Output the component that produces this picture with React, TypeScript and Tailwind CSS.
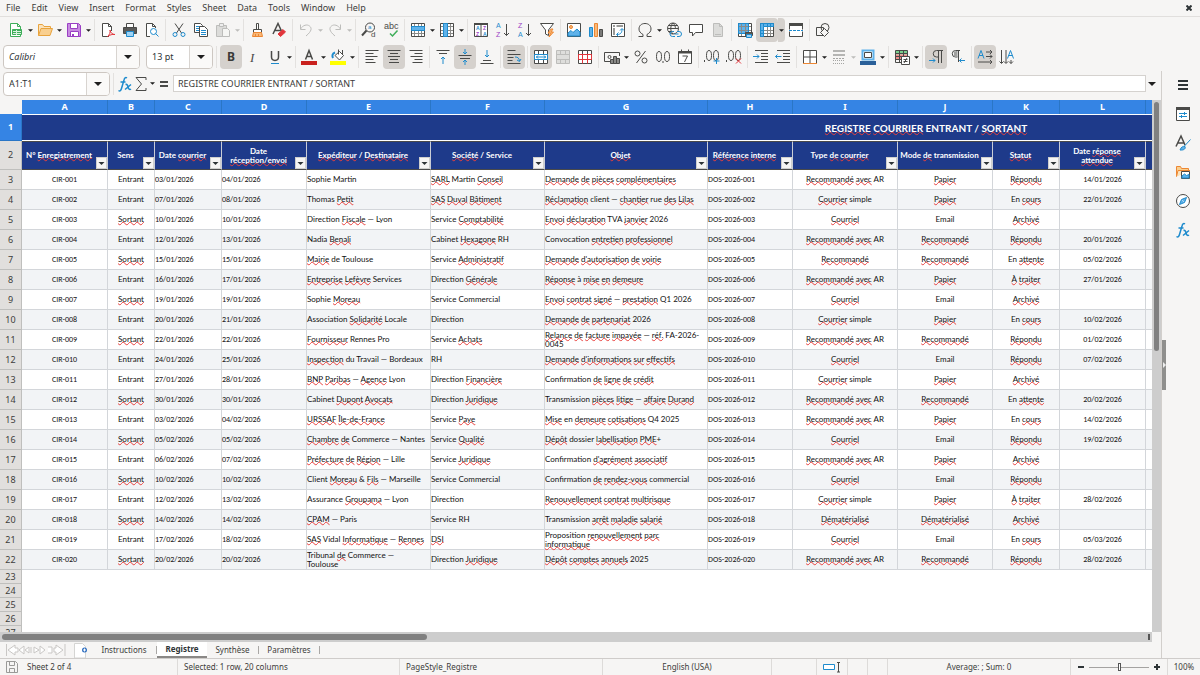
import type { ReactNode } from 'react'
import clsx from 'clsx'

const INK = '#4a4a48'
const BLUE = '#1e8bcd'
const GREEN = '#3fae5a'
const ORANGE = '#ed8733'
const RED = '#e2353b'
const PURPLE = '#9a3fc4'
const FADED = '#bdbdbb'

const glyphFont = 'Noto Sans, sans-serif'
const letterFont = 'Liberation Sans, sans-serif'

const grid = (
  <>
    <path d="M2 4.5h12M2 8.5h12M2 11.5h12M4.5 2v12M8.5 2v12M11.5 2v12" stroke="#8a8a88" />
    <path d="M1.5 1.5h13v13h-13z" />
  </>
)

const icons: Record<string, ReactNode> = {
  newDoc: (
    <>
      <path d="M2.5 1.5h7l3 3v10h-10z" fill="#fff" stroke={GREEN} />
      <path d="M9.5 1.5v3h3" stroke={GREEN} />
      <path d="M4.5 7.5h9v5h-9z" fill={GREEN} stroke={GREEN} />
      <path d="M5 9.5h8M5 11.5h8M8.5 8v5" stroke="#d9f2df" />
    </>
  ),
  open: (
    <>
      <path d="M1.5 13.5v-11h4l1.5 2h6.5v2" fill="#fbe3bd" stroke="#e8a33d" />
      <path d="M1.5 13.5l2.5-7h11.5l-2.5 7z" fill="#f9cf8f" stroke="#e8a33d" />
    </>
  ),
  save: (
    <>
      <path d="M1.5 1.5h11l2 2v11h-13z" fill="#c88be0" stroke={PURPLE} />
      <path d="M4.5 1.5h7v5h-7zM4.5 9.5h8v5h-8z" fill="#fff" stroke={PURPLE} />
      <path d="M6 12v2.5h2V12z" fill={PURPLE} stroke="none" />
    </>
  ),
  pdf: (
    <>
      <path d="M9 14.5H2.5v-13h6l3 3V9" fill="#fff" />
      <path d="M8.5 1.5v3h3" />
      <path d="M7.5 14.5c2-1.5 3-4 2.5-6.5.5 3 2.5 4.5 5 4.5-3-.5-5 .5-7.5 2z" stroke={RED} />
    </>
  ),
  print: (
    <>
      <path d="M4.5 5V1.5h7V5" fill="#fff" />
      <path d="M1.5 5.5h13v6h-13z" fill="#5a5a58" />
      <path d="M4.5 9.5h7v5h-7z" fill="#9fd3f5" stroke={BLUE} />
    </>
  ),
  preview: (
    <>
      <path d="M6 14.5H2.5v-13h6l3 3V6" fill="#fff" />
      <path d="M8.5 1.5v3h3" />
      <circle cx="9.5" cy="9.5" r="3" fill="#fff" stroke={BLUE} />
      <path d="M11.5 11.5l3 3" stroke={BLUE} />
    </>
  ),
  cut: (
    <>
      <path d="M4 1.5l6.5 9.5M12 1.5L5.5 11" />
      <circle cx="4" cy="12.5" r="2" stroke={BLUE} />
      <circle cx="12" cy="12.5" r="2" stroke={BLUE} />
    </>
  ),
  copy: (
    <>
      <path d="M1.5 1.5h6l2 2v7h-8z" fill="#fff" />
      <path d="M3 4.5h4M3 6.5h4M3 8.5h4" stroke={BLUE} />
      <path d="M6.5 4.5h5l3 3v7h-8z" fill="#fff" />
      <path d="M8 8.5h5M8 10.5h5M8 12.5h5" stroke={BLUE} />
    </>
  ),
  paste: (
    <>
      <path d="M1.5 3.5h10v11h-10z" fill="#dcdcda" stroke={FADED} />
      <path d="M4.5 1.5h4v3h-4z" fill="#eee" stroke={FADED} />
      <path d="M7.5 6.5h5l2 2v6h-7z" fill="#f6f6f4" stroke={FADED} />
    </>
  ),
  clone: (
    <>
      <path d="M7.5 1.5h2v6h-2z" fill="#fff" />
      <path d="M4.5 7.5h8v3h-8z" fill="#fff" />
      <path d="M4.5 10.5h8l1 4h-10z" fill="#f8b878" stroke={ORANGE} />
      <path d="M6.5 12v2M9.5 12v2" stroke={ORANGE} />
    </>
  ),
  clear: (
    <>
      <path d="M2 12L7 1.5 10.5 9M4 8.5h5.5" strokeWidth="1.5" />
      <path d="M7 12l5-4.5 2.5 2.5-5 4.5z" fill={RED} stroke={RED} />
    </>
  ),
  undo: <path d="M2.5 2.5v5h5M2.5 7C5 3 9 2 11.5 4s2.5 5-3.5 10" stroke={FADED} />,
  redo: <path d="M13.5 2.5v5h-5M13.5 7C11 3 7 2 4.5 4s-2.5 5 3.5 10" stroke={FADED} />,
  find: (
    <>
      <circle cx="9" cy="5.5" r="4.5" />
      <path d="M5.5 8.5L1 13.5" strokeWidth="2" />
      <text x="7" y="7" fontSize="6" fill={BLUE} stroke="none" fontFamily={letterFont}>a</text>
      <text x="10" y="15" fontSize="8" fill={INK} stroke="none" fontFamily={letterFont}>d</text>
    </>
  ),
  spell: (
    <>
      <text x="1" y="7" fontSize="9" fill={INK} stroke="none" fontFamily={letterFont}>abc</text>
      <path d="M7 11.5l2.5 2.5 5-5.5" stroke={GREEN} strokeWidth="1.5" />
    </>
  ),
  rows: (
    <>
      <path d="M1.5 1.5h13v13h-13z" fill="#fff" stroke="none" />
      {grid}
      <path d="M1.5 4.5h13v4h-13z" fill="#5fb2ea" stroke={BLUE} />
    </>
  ),
  cols: (
    <>
      <path d="M1.5 1.5h13v13h-13z" fill="#fff" stroke="none" />
      {grid}
      <path d="M4.5 1.5h4v13h-4z" fill="#5fb2ea" stroke={BLUE} />
    </>
  ),
  sort: (
    <>
      <path d="M1.5 1.5h13v13h-13zM8 1.5v13" fill="#fff" />
      <path d="M1 2h14" strokeWidth="2" />
      <g fontSize="5" stroke="none" fontFamily={letterFont} fontWeight="600">
        <text x="3" y="8" fill={BLUE}>A</text>
        <text x="3" y="14" fill={PURPLE}>Z</text>
        <text x="10" y="8" fill={PURPLE}>Z</text>
        <text x="10" y="14" fill={BLUE}>A</text>
      </g>
    </>
  ),
  sortAsc: (
    <>
      <g fontSize="7" stroke="none" fontFamily={letterFont}>
        <text x="1" y="6" fill={BLUE}>A</text>
        <text x="1" y="15" fill={PURPLE}>Z</text>
      </g>
      <path d="M11.5 2v11.5M9 11l2.5 2.5L14 11" />
    </>
  ),
  sortDesc: (
    <>
      <g fontSize="7" stroke="none" fontFamily={letterFont}>
        <text x="1" y="6" fill={PURPLE}>Z</text>
        <text x="1" y="15" fill={BLUE}>A</text>
      </g>
      <path d="M11.5 2v11.5M9 11l2.5 2.5L14 11" />
    </>
  ),
  filter: (
    <>
      <path d="M1.5 1.5h13L9.5 8v5.5L6.5 12V8z" fill="#fff" />
      <path d="M12 7l-3 4h2.5L10 15l4.5-5H12l2-3z" fill="#f8b878" stroke={ORANGE} />
    </>
  ),
  image: (
    <>
      <path d="M1.5 1.5h13v13h-13z" fill="#fff" />
      <circle cx="5" cy="5" r="1.5" fill="#f8b878" stroke={ORANGE} />
      <path d="M2 14v-3l3-2.5 2 2L11 7l3 3v4z" fill="#5fb2ea" stroke={BLUE} />
    </>
  ),
  chart: (
    <>
      <path d="M1.5 5.5h3v9h-3z" fill="#5fb2ea" stroke={BLUE} />
      <path d="M6.5 1.5h3v13h-3z" fill="#f8b878" stroke={ORANGE} />
      <path d="M11.5 7.5h3v7h-3z" fill="#7a7a78" />
    </>
  ),
  pivot: (
    <>
      <path d="M1.5 1.5h13v13h-13z" fill="#fff" />
      <path d="M3 4h2M6.5 4H13M4 6v7" strokeWidth="2" stroke="#9a9a98" />
      <path d="M7 12.5c4 0 5-2 5-5.5M10 8.5l2-2 2 2M8.5 10.5l-2 2 2 2" stroke={BLUE} />
    </>
  ),
  omega: <path d="M1.5 14.5h4.5v-2C3.5 11 2 9.5 2 7c0-3.5 2.5-5.5 6-5.5S14 3.5 14 7c0 2.5-1.5 4-4 5.5v2h4.5" />,
  link: (
    <>
      <circle cx="7" cy="6.5" r="5.5" />
      <path d="M1.5 6.5h11M2.5 3.5h9M2.5 9.5h4M7 1c-3 3-3 8 0 11M7 1c2 2 2.5 4 2.5 6" />
      <path d="M8 9.5H6.5a2 2 0 000 5H9M11 9.5h2a2 2 0 010 5h-2M8.5 12h4" stroke={BLUE} />
    </>
  ),
  comment: <path d="M1.5 2.5h13v8h-7L4.5 14v-3.5h-3z" fill="#fff" />,
  headers: (
    <>
      <path d="M3.5 1.5h6l3 3v10h-9z" fill="#dcdcda" stroke={FADED} />
      <path d="M5 12.5h6M9.5 1.5v3h3" stroke={FADED} />
    </>
  ),
  printArea: (
    <>
      <path d="M1.5 1.5h13v13h-13z" fill="#fff" stroke="none" />
      <path d="M1.5 1.5h10v10h-10z" fill="#5fb2ea" stroke="none" />
      {grid}
      <path d="M1.5 1.5h10v10h-10z" stroke={BLUE} />
      <path d="M8.5 10.5h7v3h-7z" fill="#5a5a58" />
      <path d="M9.5 12.5h5v3h-5z" fill="#9fd3f5" stroke={BLUE} />
    </>
  ),
  freeze: (
    <>
      <path d="M1.5 1.5h13v13h-13z" fill="#fff" stroke="none" />
      {grid}
      <path d="M1.5 1.5h13v3h-10v10h-3z" fill="#5fb2ea" stroke={BLUE} />
      <path d="M4.5 2v2M8.5 2v2M11.5 2v2M2 8.5h2M2 11.5h2" stroke={BLUE} />
    </>
  ),
  split: (
    <>
      <path d="M1.5 1.5h13v13h-13z" fill="#fff" />
      <path d="M1 2.5h14" strokeWidth="3" />
      <path d="M0 8.5h16" stroke="#fff" strokeWidth="2" />
      <path d="M1 8.5h14" stroke={BLUE} strokeDasharray="3 1" />
    </>
  ),
  shapes: (
    <>
      <circle cx="10" cy="5.5" r="4" />
      <path d="M1.5 5.5h7v8h-7z" />
      <path d="M9.5 6.5l4 4-4 4-4-4z" fill="#f6f5f4" />
    </>
  ),
  italic: <text x="5" y="13" fontSize="13" fill={INK} stroke="none" fontFamily="Liberation Serif, serif" fontStyle="italic">I</text>,
  bold: <text x="4" y="12" fontSize="12" fill="#3a3a38" stroke="none" fontFamily={glyphFont} fontWeight="700">B</text>,
  underline: (
    <>
      <path d="M4.5 2v6c0 4.5 7 4.5 7 0V2" strokeWidth="1.5" />
      <path d="M4 14.5h8" stroke={BLUE} />
    </>
  ),
  fontColor: (
    <>
      <path d="M4.5 10.5L8 1.5l3.5 9M5.5 7.5h5" strokeWidth="1.5" />
      <path d="M0 14h16" stroke="#c9211e" strokeWidth="4" />
    </>
  ),
  highlight: (
    <>
      <path d="M5 6.5L9.5 2.5l4 4-4 4.5z" fill="#fff" />
      <path d="M8.5.5v5M12.5 1v4" />
      <path d="M3 9c-1-2-1-4.5 2-5.5" stroke={BLUE} strokeWidth="2" />
      <path d="M0 14h16" stroke="#ffff00" strokeWidth="4" />
    </>
  ),
  left: <path d="M1.5 1.5h13M1.5 4.5h8M1.5 7.5h12M1.5 10.5h8M1.5 13.5h10" />,
  center: <path d="M1.5 1.5h13M4 4.5h8M2 7.5h12M4 10.5h8M3 13.5h10" />,
  right: <path d="M1.5 1.5h13M6.5 4.5h8M2.5 7.5h12M6.5 10.5h8M4.5 13.5h10" />,
  top: (
    <>
      <path d="M1.5 1.5h13M4 4.5h8" />
      <path d="M8 15V8M6 10l2-2 2 2" stroke={BLUE} />
    </>
  ),
  middle: (
    <>
      <path d="M1.5 6.5h13M3 9.5h10" />
      <path d="M8 0v5M6 3l2 2 2-2M8 16v-5M6 13l2-2 2 2" stroke={BLUE} />
    </>
  ),
  bottom: (
    <>
      <path d="M1.5 14.5h13M4 11.5h8" />
      <path d="M8 1v7M6 6l2 2 2-2" stroke={BLUE} />
    </>
  ),
  wrap: (
    <>
      <path d="M1.5 1.5h8M1.5 5.5h13M1.5 8.5h6M1.5 11.5h5M1.5 14.5h13" />
      <path d="M9 8c3 0 4 1 4.5 4M11 11l2.5 1.5L15 10" stroke={BLUE} />
    </>
  ),
  merge: (
    <>
      <path d="M1.5 1.5h13v13h-13zM1.5 5.5h13M1.5 10.5h13M5.5 1.5v4M10.5 1.5v4M5.5 10.5v4M10.5 10.5v4" fill="#fff" />
      <path d="M1.5 5.5h13v5h-13z" fill="#fff" stroke={BLUE} />
      <path d="M3 8h10M5 6.5L3.5 8 5 9.5M11 6.5L12.5 8 11 9.5" stroke={BLUE} />
    </>
  ),
  mergeCells: <path d="M1.5 1.5h13v13h-13zM1.5 5.5h13M1.5 10.5h13M5.5 1.5v4M10.5 1.5v4M5.5 10.5v4M10.5 10.5v4" fill="#dededc" stroke={FADED} />,
  unmerge: (
    <>
      <path d="M1.5 1.5h13v13h-13zM5.5 1.5v4M10.5 1.5v4M5.5 10.5v4M10.5 10.5v4" fill="#fff" />
      <path d="M1.5 5.5h13v5h-13zM5.5 5.5v9M10.5 5.5v9" stroke={RED} />
    </>
  ),
  currency: (
    <>
      <path d="M6 12.5H.5v-9h15V7" />
      <circle cx="5.5" cy="8" r="1.5" />
      <path d="M6.5 10.5h3v4h-3zM9.5 7.5h3v7h-3zM12.5 9.5h3v5h-3z" fill="#8a8a88" />
    </>
  ),
  percent: (
    <>
      <circle cx="4.5" cy="4.5" r="2.5" />
      <circle cx="11.5" cy="11.5" r="2.5" />
      <path d="M12.5 2L3.5 14" />
    </>
  ),
  number: (
    <>
      <ellipse cx="4" cy="7.5" rx="2.5" ry="5" />
      <ellipse cx="12" cy="7.5" rx="2.5" ry="5" />
      <path d="M8 12v2" />
    </>
  ),
  date: (
    <>
      <path d="M1.5 2.5h13v12h-13z" fill="#fff" />
      <path d="M1 3.5h14" strokeWidth="2" />
      <path d="M4.5.5v2M11.5.5v2M5.5 7h5L7.5 13" />
    </>
  ),
  addDecimal: (
    <>
      <ellipse cx="5" cy="6.5" rx="2.5" ry="5" />
      <ellipse cx="12" cy="6.5" rx="2.5" ry="5" />
      <path d="M.5 11v2" />
      <path d="M12.5 9v6M9.5 12h6" stroke={BLUE} />
    </>
  ),
  removeDecimal: (
    <>
      <ellipse cx="5" cy="6.5" rx="2.5" ry="5" />
      <ellipse cx="12" cy="6.5" rx="2.5" ry="5" />
      <path d="M.5 11v2" />
      <path d="M10 9.5l5 5M15 9.5l-5 5" stroke={RED} />
    </>
  ),
  indent: (
    <>
      <path d="M2 1.5h13M8 4.5h7M8 7.5h7M8 10.5h7M2 13.5h13" />
      <path d="M0 7.5h6M4 5.5l2 2-2 2" stroke={BLUE} />
    </>
  ),
  outdent: (
    <>
      <path d="M2 1.5h13M8 4.5h7M8 7.5h7M8 10.5h7M2 13.5h13" />
      <path d="M.5 7.5h6M2.5 5.5l-2 2 2 2" stroke={BLUE} />
    </>
  ),
  borders: (
    <>
      <path d="M1.5 1.5h13v13h-13zM8 1.5v13M1.5 8h13" fill="#fff" />
      <path d="M1 14.5h14" stroke={ORANGE} />
    </>
  ),
  borderStyle: (
    <>
      <path d="M2 2h12M2 6h12" stroke="#b5b5b3" strokeWidth="2" />
      <path d="M2 9.5h12" stroke="#a5a5a3" strokeDasharray="2 1" />
      <path d="M2 11.5h12M2 14.5h12" stroke="#a5a5a3" strokeDasharray="1 1" />
    </>
  ),
  borderColor: (
    <>
      <path d="M2.5 1.5h11v9h-11z" fill="#fff" stroke="#5fb2ea" strokeWidth="2" />
      <path d="M4.5 3.5h7v5h-7z" />
      <path d="M0 14h16" stroke="#2a6099" strokeWidth="4" />
    </>
  ),
  conditional: (
    <>
      <path d="M1.5 1.5h12v4h-12z" fill="#79cf8c" stroke="none" />
      <path d="M1.5 5.5h12v5h-12z" fill="#f08b8b" stroke="none" />
      <path d="M1.5 1.5h12v12h-12zM1.5 4.5h12M1.5 7.5h12M1.5 10.5h12M5.5 1.5v12M9.5 1.5v12" />
      <path d="M7.5 7.5h8v8h-8z" fill="#fff" />
      <path d="M9.5 10.5h4M9.5 12.5h4M13 9l-3 5" />
    </>
  ),
  ltr: (
    <>
      <path d="M15 1.5H8.5a3 3 0 000 6.5h2M10.5 1.5V14M13.5 1.5V14" />
      <path d="M1 11.5h6M5 9.5l2 2-2 2" stroke={BLUE} />
    </>
  ),
  rtl: (
    <>
      <path d="M10 1.5H5.5a3 3 0 000 6.5h2M8.5 1.5V13" />
      <path d="M5 2.5v5M6.5 2v6" strokeWidth="2" stroke="#a0a09e" />
      <path d="M15 11.5H9.5M11.5 9.5l-2 2 2 2" stroke={BLUE} />
    </>
  ),
  textHoriz: (
    <>
      <path d="M1 9.5l3-8 3 8M2 6.5h4" stroke={BLUE} />
      <path d="M9 3h6M9 7.5h6M1 13h14M13 1l2 2-2 2M13 5.5l2 2-2 2M13 11l2 2-2 2" />
    </>
  ),
  textVert: (
    <>
      <path d="M8.5 9.5l3-8 3 8M9.5 6.5h4" stroke={BLUE} />
      <path d="M2.5 1v13M7 1v13M12 11v3.5M.5 12.5l2 2 2-2M5 12.5l2 2 2-2M10 12.5l2 2 2-2" />
    </>
  ),
  fx: (
    <g stroke={BLUE} strokeWidth="1.5">
      <path d="M10 2c-1.5-1-2.5 0-3 2L4.5 12.5c-.5 2-1.5 3-3 2M3.5 6h5" />
      <path d="M8.5 8.5c1.5-.5 2 .5 2.5 2.5s1.5 3 3 2M14 8.5l-6 5" />
    </g>
  ),
  sigma: <path d="M13 4V1.5H3L8.5 8 3 14.5h10V12" />,
  equals: <path d="M4 6h8M4 10h8" strokeWidth="2" />,
  hamburger: <path d="M3 4h10M3 8h10M3 12h10" strokeWidth="2" stroke="#2e3436" />,
  properties: (
    <>
      <path d="M1.5 1.5h13v13h-13z" fill="#fff" />
      <path d="M1 2.5h14" strokeWidth="3" />
      <path d="M4 7.5h8M4 10.5h8M9.5 6v3M6.5 9v3" stroke={BLUE} />
    </>
  ),
  stylesPanel: (
    <>
      <path d="M1 11.5L6 1l4 9M3 8h6" strokeWidth="1.5" />
      <path d="M15.5 4.5l-6 6.5M5 15c1-3 3-4 5-3.5 1 2-1 4-5 3.5z" fill="#5fb2ea" stroke={BLUE} />
    </>
  ),
  gallery: (
    <>
      <path d="M1.5 12.5v-10h4l1 2h7V7" fill="#f9cf8f" stroke={ORANGE} />
      <path d="M1.5 12.5L3 6.5h12" stroke={ORANGE} fill="#fbe3bd" />
      <path d="M6.5 7.5h8v7h-8z" fill="#fff" />
      <path d="M7 14v-2l2.5-2 2 1.5 2.5-1V14z" fill="#5fb2ea" stroke={BLUE} />
    </>
  ),
  navigator: (
    <>
      <circle cx="8" cy="8" r="6.5" fill="#fff" />
      <path d="M11.5 4.5l-2 5-5 2 2-5z" fill="#5fb2ea" stroke={BLUE} />
      <path d="M7.5 7.5l1 1" stroke="#fff" />
    </>
  ),
  disk: (
    <>
      <path d="M2.5 2.5h9l2 2v9h-11z" stroke="#9a9a98" />
      <path d="M5.5 2.5h5v4h-5zM5.5 9.5h5v4h-5z" stroke="#9a9a98" />
    </>
  ),
  newSheet: (
    <>
      <path d="M2.5 1.5h8l3 3V16h-11z" fill="#fff" stroke="#d5d5d3" />
      <circle cx="12.5" cy="8" r="2.5" fill="#2f6fc0" stroke="none" />
      <path d="M11 8h3M12.5 6.5v3" stroke="#fff" />
    </>
  ),
}

function Icon({ name }: { name: string }) {
  return (
    <svg viewBox="0 0 16 16" className="h-4 w-4 shrink-0 overflow-visible" fill="none" stroke={INK} aria-hidden="true">
      {icons[name]}
    </svg>
  )
}

function Caret({ big, faded }: { big?: boolean; faded?: boolean }) {
  return (
    <svg viewBox="0 0 8 4" className={big ? 'h-1 w-2' : 'h-[3px] w-[5px]'} fill={faded ? FADED : '#1f1f1f'} aria-hidden="true">
      <path d="M0 0h8L4 4z" />
    </svg>
  )
}

const tools = [
  'newDoc v open v save v | pdf print preview | cut copy paste f | clone clear | undo f redo f | find spell |',
  'rows v cols v | sort sortAsc sortDesc filter | image chart pivot | omega v link comment headers |',
  'printArea freeze* v* split | shapes',
].join(' ')

const formatTools = [
  'bold* italic underline v | fontColor v highlight v | left center* right | top middle* bottom | wrap* |',
  'merge* mergeCells unmerge | currency v percent number date | addDecimal removeDecimal | indent outdent |',
  'borders v borderStyle f borderColor v | conditional v | ltr* rtl | textHoriz* textVert',
].join(' ')

// v: drop-down arrow, f: disabled arrow, |: separator, *: pressed
function ToolRow({ spec }: { spec: string }) {
  return (
    <>
      {spec.split(' ').map((token, i) => {
        const on = token.endsWith('*')
        const name = token.replace('*', '')
        if (name === '|') {
          return <span key={i} className="mx-[2px] h-[22px] w-px shrink-0 bg-[#e3e1df]" />
        }
        if (name === 'v' || name === 'f') {
          return (
            <button
              key={i}
              type="button"
              aria-label="More options"
              className={clsx('flex h-6 w-[7px] shrink-0 items-center justify-center', on && 'rounded-r bg-[#d5d1cd]')}
            >
              <Caret faded={name === 'f'} />
            </button>
          )
        }
        return (
          <button
            key={i}
            type="button"
            aria-label={name}
            aria-pressed={on}
            className={clsx('flex h-6 w-[22px] shrink-0 items-center justify-center rounded', on && 'bg-[#d5d1cd]')}
          >
            <Icon name={name} />
          </button>
        )
      })}
    </>
  )
}

function Combo({ label, value, className, italic }: { label: string; value: string; className: string; italic?: boolean }) {
  return (
    <div className={clsx('flex h-6 shrink-0 overflow-hidden rounded border border-[#cdc7c2] bg-white', className)}>
      <input
        aria-label={label}
        defaultValue={value}
        className={clsx('min-w-0 flex-1 bg-transparent pl-[5px] text-[#2e3436] outline-none', italic && 'italic')}
      />
      <button
        type="button"
        aria-label={`${label} list`}
        className="flex w-[23px] items-center justify-center border-l border-[#d8d4d0] bg-[#faf9f8]"
      >
        <Caret big />
      </button>
    </div>
  )
}

const menus = ['File', 'Edit', 'View', 'Insert', 'Format', 'Styles', 'Sheet', 'Data', 'Tools', 'Window', 'Help']

const columns = [
  { id: 'A', width: 'w-[86px]', title: 'N° _Enregistrement_', digits: true },
  { id: 'B', width: 'w-[47px]', title: 'Sens' },
  { id: 'C', width: 'w-[67px]', title: 'Date _courrier_', left: true, digits: true },
  { id: 'D', width: 'w-[85px]', title: 'Date _réception/envoi_', left: true, digits: true },
  { id: 'E', width: 'w-[124px]', title: '_Expéditeur_ / _Destinataire_', left: true },
  { id: 'F', width: 'w-[114px]', title: '_Société_ / Service', left: true },
  { id: 'G', width: 'w-[163px]', title: '_Objet_', left: true },
  { id: 'H', width: 'w-[85px]', title: '_Référence_ _interne_', left: true, digits: true },
  { id: 'I', width: 'w-[105px]', title: 'Type _de_ _courrier_' },
  { id: 'J', width: 'w-[95px]', title: 'Mode _de_ transmission' },
  { id: 'K', width: 'w-[67px]', title: '_Statut_' },
  { id: 'L', width: 'w-[86px]', title: 'Date _réponse_ _attendue_', digits: true },
]

const RAR = '_Recommandé_ _avec_ AR'
const SIMPLE = '_Courrier_ simple'
const COURRIEL = '_Courriel_'
const REC = '_Recommandé_'
const PAPIER = '_Papier_'
const DEMAT = '_Dématérialisé_'
const REPONDU = '_Répondu_'
const COURS = 'En _cours_'
const ARCHIVE = '_Archivé_'
const ATTENTE = 'En _attente_'
const TRAITER = '_À_ _traiter_'
const IN = 'Entrant'
const OUT = '_Sortant_'

// Words between underscores carry the spell-checker's red wave.
const letters: string[][] = [
  [IN, '03/01/2026', '04/01/2026', 'Sophie Martin', '_SARL_ Martin _Conseil_', '_Demande_ _de_ _pièces_ _complémentaires_', RAR, PAPIER, REPONDU, '14/01/2026'],
  [IN, '07/01/2026', '08/01/2026', 'Thomas _Petit_', '_SAS_ _Duval_ _Bâtiment_', '_Réclamation_ client — _chantier_ rue _des_ _Lilas_', SIMPLE, PAPIER, COURS, '22/01/2026'],
  [OUT, '10/01/2026', '10/01/2026', 'Direction _Fiscale_ — Lyon', 'Service _Comptabilité_', '_Envoi_ _déclaration_ TVA _janvier_ 2026', COURRIEL, 'Email', ARCHIVE, ''],
  [IN, '12/01/2026', '13/01/2026', 'Nadia _Benali_', 'Cabinet _Hexagone_ RH', 'Convocation _entretien_ _professionnel_', RAR, REC, REPONDU, '20/01/2026'],
  [OUT, '15/01/2026', '15/01/2026', '_Mairie_ de Toulouse', 'Service _Administratif_', "_Demande_ _d'autorisation_ _de_ _voirie_", REC, REC, ATTENTE, '05/02/2026'],
  [IN, '16/01/2026', '17/01/2026', '_Entreprise_ _Lefèvre_ Services', 'Direction _Générale_', '_Réponse_ à _mise_ _en_ _demeure_', RAR, PAPIER, TRAITER, '27/01/2026'],
  [OUT, '19/01/2026', '19/01/2026', 'Sophie _Moreau_', 'Service Commercial', '_Envoi_ _contrat_ _signé_ — _prestation_ Q1 2026', COURRIEL, 'Email', ARCHIVE, ''],
  [IN, '20/01/2026', '21/01/2026', 'Association _Solidarité_ Locale', 'Direction', '_Demande_ _de_ _partenariat_ 2026', SIMPLE, PAPIER, COURS, '10/02/2026'],
  [OUT, '22/01/2026', '22/01/2026', '_Fournisseur_ Rennes Pro', 'Service _Achats_', '_Relance_ _de_ _facture_ _impayée_ — _réf._ FA-2026-\n0045', RAR, REC, REPONDU, '01/02/2026'],
  [IN, '24/01/2026', '25/01/2026', '_Inspection_ du Travail — Bordeaux', 'RH', "_Demande_ _d'informations_ _sur_ _effectifs_", COURRIEL, 'Email', REPONDU, '07/02/2026'],
  [IN, '27/01/2026', '28/01/2026', '_BNP_ _Paribas_ — _Agence_ Lyon', 'Direction _Financière_', 'Confirmation _de_ _ligne_ _de_ _crédit_', SIMPLE, PAPIER, ARCHIVE, ''],
  [OUT, '30/01/2026', '30/01/2026', 'Cabinet _Dupont_ _Avocats_', 'Direction _Juridique_', 'Transmission _pièces_ _litige_ — _affaire_ _Durand_', RAR, REC, ATTENTE, '20/02/2026'],
  [IN, '03/02/2026', '04/02/2026', '_URSSAF_ _Île-de-France_', 'Service _Paye_', '_Mise_ en _demeure_ _cotisations_ Q4 2025', RAR, PAPIER, COURS, '14/02/2026'],
  [OUT, '05/02/2026', '05/02/2026', '_Chambre_ _de_ Commerce — Nantes', 'Service _Qualité_', '_Dépôt_ dossier _labellisation_ _PME_+', COURRIEL, 'Email', REPONDU, '19/02/2026'],
  [IN, '06/02/2026', '07/02/2026', '_Préfecture_ _de_ _Région_ — Lille', 'Service _Juridique_', "Confirmation _d'agrément_ _associatif_", RAR, PAPIER, ARCHIVE, ''],
  [OUT, '10/02/2026', '10/02/2026', 'Client _Moreau_ & _Fils_ — Marseille', 'Service Commercial', 'Confirmation _de_ _rendez-vous_ commercial', COURRIEL, 'Email', REPONDU, ''],
  [IN, '12/02/2026', '13/02/2026', 'Assurance _Groupama_ — Lyon', 'Direction', '_Renouvellement_ _contrat_ _multirisque_', SIMPLE, PAPIER, TRAITER, '28/02/2026'],
  [OUT, '14/02/2026', '14/02/2026', '_CPAM_ — Paris', 'Service RH', 'Transmission _arrêt_ _maladie_ _salarié_', DEMAT, DEMAT, ARCHIVE, ''],
  [IN, '17/02/2026', '18/02/2026', '_SAS_ Vidal _Informatique_ — _Rennes_', '_DSI_', 'Proposition _renouvellement_ _parc_\n_informatique_', COURRIEL, 'Email', COURS, '05/03/2026'],
  [OUT, '20/02/2026', '20/02/2026', 'Tribunal _de_ Commerce —\nToulouse', 'Direction _Juridique_', '_Dépôt_ _comptes_ _annuels_ 2025', RAR, REC, REPONDU, '28/02/2026'],
]

const rows = letters.map((cells, i) => {
  const nr = String(i + 1).padStart(3, '0')
  return [`CIR-${nr}`, ...cells.slice(0, 6), `DOS-2026-${nr}`, ...cells.slice(6)]
})

function Checked({ text }: { text: string }) {
  return (
    <>
      {text.split('_').map((part, i) =>
        i % 2 ? (
          <span key={i} className="underline decoration-[#e8403c] decoration-wavy decoration-1 underline-offset-[-1px] [text-decoration-skip-ink:none]">
            {part}
          </span>
        ) : (
          part
        ),
      )}
    </>
  )
}

function RowHead({ n, active }: { n: number; active?: boolean }) {
  return (
    <th
      scope="row"
      className={clsx(
        "border-r border-b text-center font-['Noto_Sans',sans-serif] text-[9px] leading-[12px]",
        active ? 'border-[#2a76c6] bg-[#3584e4] font-bold text-white' : 'border-[#bfbfbd] bg-[#e1dfdd] font-normal text-[#3d3d3b]',
      )}
    >
      {n}
    </th>
  )
}

function Sheet() {
  return (
    <table className="w-[1830px] table-fixed border-separate border-spacing-0 font-['Lato',sans-serif] text-[8px] leading-[9px] text-[#111]">
      <colgroup>
        <col className="w-[22px]" />
        {columns.map((c) => (
          <col key={c.id} className={c.width} />
        ))}
        <col />
      </colgroup>
      <thead>
        <tr className="h-[14px] bg-[#3584e4] font-['Noto_Sans',sans-serif] text-[9px] leading-[12px] text-white">
          <td className="bg-[#f6f5f4]" />
          {columns.map((c) => (
            <th key={c.id} scope="col" className="border-r border-[#2a76c6] font-bold">
              {c.id}
            </th>
          ))}
          <td />
        </tr>
      </thead>
      <tbody>
        <tr className="h-[27px]">
          <RowHead n={1} active />
          <td colSpan={13} className="border-y border-white bg-[#1e3a8a] text-center text-[10px] leading-[12px] font-bold text-white">
            <Checked text="_REGISTRE_ _COURRIER_ ENTRANT / _SORTANT_" />
          </td>
        </tr>
        <tr className="h-[29px]">
          <RowHead n={2} />
          {columns.map((c) => (
            <th key={c.id} scope="col" className="border-y border-r border-y-[#4a4a4a] border-r-[#c9cdd6] bg-[#1e3a8a] font-bold text-white">
              <div className="flex h-[27px] items-center">
                <span className="flex-1">
                  <Checked text={c.title} />
                </span>
                <button
                  type="button"
                  aria-label={`Filter column ${c.id}`}
                  className="flex h-3 w-[11px] shrink-0 items-center justify-center self-end border border-[#cfcfcd] bg-[#f6f5f4]"
                >
                  <svg viewBox="0 0 8 4" className="h-[3px] w-[7px]" fill="#2e3436" aria-hidden="true">
                    <path d="M0 0h8L4 4z" />
                  </svg>
                </button>
              </div>
            </th>
          ))}
          <td className="border-y border-[#4a4a4a] bg-[#1e3a8a]" />
        </tr>
        {rows.map((cells, r) => (
          <tr key={cells[0]} className={clsx('h-5', r % 2 === 1 && 'bg-[#f2f4f6]')}>
            <RowHead n={r + 3} />
            {cells.map((text, i) => (
              <td
                key={i}
                className={clsx(
                  'border-r border-b border-[#d3d6da] whitespace-pre',
                  columns[i].left ? 'text-left' : 'text-center',
                  columns[i].digits && "font-['Carlito','Lato',sans-serif]",
                )}
              >
                <Checked text={text} />
              </td>
            ))}
            <td className="border-b border-[#d3d6da]" />
          </tr>
        ))}
        {[23, 24, 25, 26, 27].map((n) => (
          <tr key={n} className="h-[14px]">
            <RowHead n={n} />
            <td colSpan={13} />
          </tr>
        ))}
      </tbody>
    </table>
  )
}

function FormulaBar() {
  return (
    <div className="flex h-[29px] shrink-0 items-center pr-[3px] pb-1 pl-[3px]">
      <Combo label="Name box" value="A1:T1" className="w-[107px]" />
      <span className="mx-[3px] h-[22px] w-px bg-[#e3e1df]" />
      <button type="button" aria-label="Function wizard" className="h-4 w-4">
        <Icon name="fx" />
      </button>
      <button type="button" aria-label="Select function" className="flex items-center gap-px">
        <Icon name="sigma" />
        <Caret />
      </button>
      <button type="button" aria-label="Formula" className="mx-px h-4 w-4">
        <Icon name="equals" />
      </button>
      <input
        aria-label="Formula input"
        defaultValue="REGISTRE COURRIER ENTRANT / SORTANT"
        className="h-[17px] min-w-0 flex-1 border border-[#d5d2cf] bg-white px-1 text-[#3a3a38] outline-none"
      />
      <button type="button" aria-label="Expand formula bar" className="flex h-4 w-3 items-center justify-center">
        <Caret big />
      </button>
    </div>
  )
}

function SheetTabs() {
  const divider = <span className="h-2 w-px self-center bg-[#a9a7a5]" />
  return (
    <nav aria-label="Sheets" className="flex h-4 shrink-0 items-stretch text-[8px]">
      <div className="flex w-[72px] items-center pl-[6px]">
        <svg viewBox="0 0 60 12" className="h-3 w-[60px]" fill="#fff" stroke="#c9c7c5" aria-hidden="true">
          <path d="M.5 0v12M9 1L2 6l7 5V8h3V4H9zM18 2v8l-5-4zM23 3l-4 3 4 3zM25 3v6M28 3l5 3-5 3zM34 2l5 4-5 4zM42 3h4v6h-4M48 4h2V1l7 5-7 5V8h-2zM59 0v12" />
        </svg>
      </div>
      <button type="button" aria-label="Add sheet" className="mr-1 h-4 w-4">
        <Icon name="newSheet" />
      </button>
      <a href="#instructions" className="flex w-16 items-center justify-center">
        Instructions
      </a>
      {divider}
      <a href="#registre" aria-current="page" className="flex w-[50px] items-center justify-center border-b-2 border-[#8a8886] bg-white font-bold text-[#2e3436]">
        Registre
      </a>
      <a href="#synthese" className="flex w-[51px] items-center justify-center">
        Synthèse
      </a>
      {divider}
      <a href="#parametres" className="flex w-[60px] items-center justify-center">
        Paramètres
      </a>
      {divider}
    </nav>
  )
}

function StatusBar() {
  const cell = 'flex min-w-0 items-center border-r border-[#dddbd9] whitespace-nowrap'
  return (
    <footer className="flex h-[17px] shrink-0 items-stretch border-t border-[#cfccca] text-[8px]">
      <div className={clsx(cell, 'flex-[173] gap-[7px] pl-1')}>
        <Icon name="disk" />
        Sheet 2 of 4
      </div>
      <div className={clsx(cell, 'flex-[215] pl-[6px]')}>Selected: 1 row, 20 columns</div>
      <div className={clsx(cell, 'flex-[196] pl-[6px]')}>PageStyle_Registre</div>
      <div className={clsx(cell, 'flex-[168] justify-center')}>English (USA)</div>
      <div className={clsx(cell, 'flex-[44]')} />
      <div className={clsx(cell, 'flex-[30] justify-center')}>
        <svg viewBox="0 0 18 12" className="h-3 w-[18px]" fill="none" stroke={INK} aria-hidden="true">
          <path d="M.5 3.5h11v5H.5z" fill="#fff" stroke={BLUE} />
          <path d="M14 1.5h3M14 11h3M15.5 1.5V11" />
        </svg>
      </div>
      <div className={clsx(cell, 'flex-[19]')} />
      <div className={clsx(cell, 'flex-[19]')} />
      <div className={clsx(cell, 'flex-[182] justify-center')}>Average: ; Sum: 0</div>
      <div className={clsx(cell, 'flex-[84] gap-1 px-[6px]')}>
        <button type="button" aria-label="Zoom out" className="w-2 shrink-0">
          <svg viewBox="0 0 8 8" className="h-2 w-2" stroke="#2e3436" strokeWidth="2" aria-hidden="true"><path d="M1 4h6" /></svg>
        </button>
        <input
          type="range"
          aria-label="Zoom"
          defaultValue={50}
          className="h-2 w-full min-w-0 flex-1 appearance-none bg-[linear-gradient(#a5a3a1,#a5a3a1)] bg-[length:100%_1px] bg-center bg-no-repeat [&::-webkit-slider-thumb]:h-2 [&::-webkit-slider-thumb]:w-[3px] [&::-webkit-slider-thumb]:appearance-none [&::-webkit-slider-thumb]:border [&::-webkit-slider-thumb]:border-[#555] [&::-webkit-slider-thumb]:bg-white"
        />
        <button type="button" aria-label="Zoom in" className="w-2 shrink-0">
          <svg viewBox="0 0 8 8" className="h-2 w-2" stroke="#2e3436" strokeWidth="2" aria-hidden="true"><path d="M1 4h6M4 1v6" /></svg>
        </button>
      </div>
      <div className="flex min-w-0 flex-[32] items-center justify-center">100%</div>
    </footer>
  )
}

export default function App() {
  return (
    <div className="flex h-screen flex-col overflow-hidden bg-[#f6f5f4] font-['Noto_Sans',sans-serif] text-[9px] leading-[12px] text-[#3d3d3b]">
      <header className="shrink-0">
        <div className="flex h-[17px] items-center gap-[11px] border-b border-[#e1dfdd] pl-[6px]">
          {menus.map((m) => (
            <button key={m} type="button">
              {m}
            </button>
          ))}
          <button type="button" aria-label="Close document" className="mr-2 ml-auto">
            <svg viewBox="0 0 6 6" className="h-[6px] w-[6px]" stroke="#2e3436" strokeWidth="2" aria-hidden="true">
              <path d="M.5.5l5 5M5.5.5l-5 5" />
            </svg>
          </button>
        </div>
        <div className="flex h-[26px] items-center pl-[5px]">
          <ToolRow spec={tools} />
        </div>
        <div className="flex h-7 items-center pl-[3px]">
          <Combo label="Font name" value="Calibri" className="mr-[6px] w-[137px]" italic />
          <Combo label="Font size" value="13 pt" className="w-[67px]" />
          <span className="mx-[3px] h-[22px] w-px bg-[#e3e1df]" />
          <ToolRow spec={formatTools} />
        </div>
      </header>

      <div className="flex min-h-0 flex-1">
        <main className="flex min-w-0 flex-1 flex-col">
          <FormulaBar />
          <div className="flex min-h-0 flex-1">
            <div className="min-w-0 flex-1 overflow-hidden bg-white">
              <Sheet />
            </div>
            <div className="w-[9px] bg-[#cdcdcd] px-[2px] pt-[2px]">
              <div className="h-[47%] rounded-full bg-[#808080]" />
            </div>
          </div>
          <div className="mr-[9px] flex h-[10px] shrink-0 items-center justify-between bg-[#cdcdcd] px-[2px]">
            <div className="h-[6px] w-[37%] rounded-full bg-[#808080]" />
            <div className="h-[6px] w-[2px] bg-[#555]" />
          </div>
          <SheetTabs />
        </main>
        <div className="flex w-[5px] shrink-0 items-center border-l border-[#d2cfcc]">
          <div className="flex h-[50px] w-full items-center justify-center bg-[#8f8f8d]">
            <svg viewBox="0 0 3 6" className="h-[6px] w-[3px]" fill="#eee" aria-hidden="true">
              <path d="M0 0l3 3-3 3z" />
            </svg>
          </div>
        </div>
        <aside className="flex w-[34px] shrink-0 flex-col items-center gap-[13px] pt-[6px]">
          {['hamburger', 'properties', 'stylesPanel', 'gallery', 'navigator', 'fx'].map((name) => (
            <button key={name} type="button" aria-label={name} className="h-4 w-4">
              <Icon name={name} />
            </button>
          ))}
        </aside>
      </div>

      <StatusBar />
    </div>
  )
}
